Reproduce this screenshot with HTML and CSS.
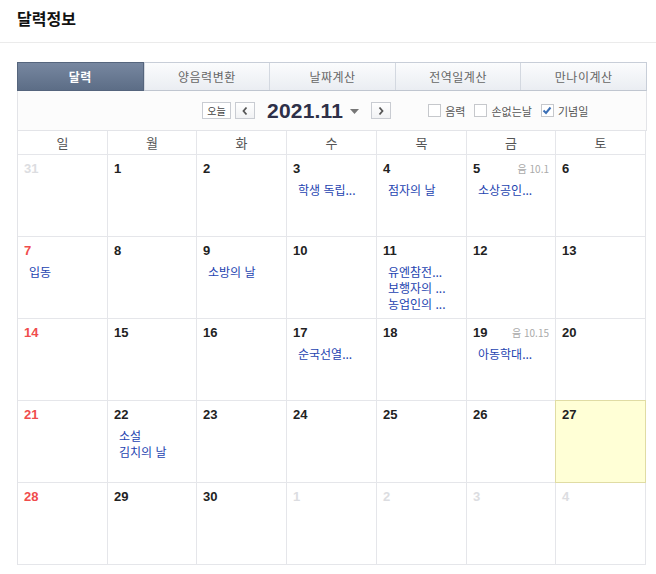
FILE: index.html
```html
<!DOCTYPE html>
<html lang="ko">
<head>
<meta charset="utf-8">
<link rel="stylesheet" href="styles.css">
</head>
<body>
<div class="head"><h1 class="title">달력정보</h1></div>
<div class="cal">
  <div class="tabs">
    <div class="tab on">달력</div>
    <div class="tab">양음력변환</div>
    <div class="tab">날짜계산</div>
    <div class="tab">전역일계산</div>
    <div class="tab">만나이계산</div>
  </div>
  <div class="nav">
    <span class="btn today">오늘</span>
    <span class="btn arrow"><svg width="8" height="10" viewBox="0 0 8 10"><path d="M5.5 1.5 L2.5 5 L5.5 8.5" fill="none" stroke="#555" stroke-width="1.8"/></svg></span>
    <span class="ym">2021.11</span>
    <span class="caret"><svg width="9" height="5" viewBox="0 0 9 5"><path d="M0 0 H9 L4.5 5 Z" fill="#777"/></svg></span>
    <span class="btn arrow next"><svg width="8" height="10" viewBox="0 0 8 10"><path d="M2.5 1.5 L5.5 5 L2.5 8.5" fill="none" stroke="#555" stroke-width="1.8"/></svg></span>
    <span class="opts">
      <span class="opt"><span class="cb"></span>음력</span>
      <span class="opt"><span class="cb"></span>손없는날</span>
      <span class="opt"><span class="cb checked"><svg width="10" height="9" viewBox="0 0 10 9"><path d="M1.5 4.5 L4 7 L8.5 1.5" fill="none" stroke="#3b6fb6" stroke-width="2"/></svg></span>기념일</span>
    </span>
  </div>
  <div class="grid">
    <div class="dh">일</div><div class="dh">월</div><div class="dh">화</div><div class="dh">수</div><div class="dh">목</div><div class="dh">금</div><div class="dh">토</div>

    <div class="cell"><div class="d other">31</div></div>
    <div class="cell"><div class="d">1</div></div>
    <div class="cell"><div class="d">2</div></div>
    <div class="cell"><div class="d">3</div><div class="ev">학생 독립...</div></div>
    <div class="cell"><div class="d">4</div><div class="ev">점자의 날</div></div>
    <div class="cell"><div class="d">5<span class="lunar">음 10.1</span></div><div class="ev">소상공인...</div></div>
    <div class="cell"><div class="d">6</div></div>

    <div class="cell"><div class="d sun">7</div><div class="ev">입동</div></div>
    <div class="cell"><div class="d">8</div></div>
    <div class="cell"><div class="d">9</div><div class="ev">소방의 날</div></div>
    <div class="cell"><div class="d">10</div></div>
    <div class="cell"><div class="d">11</div><div class="ev">유엔참전...</div><div class="ev">보행자의 ...</div><div class="ev">농업인의 ...</div></div>
    <div class="cell"><div class="d">12</div></div>
    <div class="cell"><div class="d">13</div></div>

    <div class="cell"><div class="d sun">14</div></div>
    <div class="cell"><div class="d">15</div></div>
    <div class="cell"><div class="d">16</div></div>
    <div class="cell"><div class="d">17</div><div class="ev">순국선열...</div></div>
    <div class="cell"><div class="d">18</div></div>
    <div class="cell"><div class="d">19<span class="lunar">음 10.15</span></div><div class="ev">아동학대...</div></div>
    <div class="cell"><div class="d">20</div></div>

    <div class="cell"><div class="d sun">21</div></div>
    <div class="cell"><div class="d">22</div><div class="ev">소설</div><div class="ev">김치의 날</div></div>
    <div class="cell"><div class="d">23</div></div>
    <div class="cell"><div class="d">24</div></div>
    <div class="cell"><div class="d">25</div></div>
    <div class="cell"><div class="d">26</div></div>
    <div class="cell today-cell"><div class="d">27</div></div>

    <div class="cell"><div class="d sun">28</div></div>
    <div class="cell"><div class="d">29</div></div>
    <div class="cell"><div class="d">30</div></div>
    <div class="cell"><div class="d other">1</div></div>
    <div class="cell"><div class="d other">2</div></div>
    <div class="cell"><div class="d other">3</div></div>
    <div class="cell"><div class="d other">4</div></div>
  </div>
</div>
</body>
</html>
```

FILE: styles.css
```css
* { box-sizing: border-box; }
body {
  margin: 0;
  background: #fff;
  font-family: "Noto Sans CJK KR", "Noto Sans", sans-serif;
  color: #222;
}
.head {
  height: 43px;
  border-bottom: 1px solid #ebebeb;
  padding: 8px 17px 0;
}
.title {
  margin: 0;
  font-size: 16px;
  font-weight: bold;
  line-height: 20px;
  color: #111;
}
.cal {
  margin: 19px 0 0 17px;
  width: 630px;
}
.tabs {
  display: grid;
  grid-template-columns: repeat(5, 1fr);
  height: 29px;
  border: 1px solid #c8ced8;
  border-bottom-color: #c0c6d0;
}
.tab {
  display: flex;
  align-items: center;
  justify-content: center;
  font-size: 12px;
  color: #666;
  background: linear-gradient(#fbfcfd, #eaedf2);
  border-left: 1px solid #d3d8e0;
  letter-spacing: 0.5px;
}
.tab:first-child { border-left: none; }
.tab.on {
  background: linear-gradient(#7787a0, #5c6d86);
  color: #fff;
  font-weight: bold;
  margin: -1px 0 -1px -1px;
  border: 1px solid #55657d;
}
.nav {
  display: flex;
  align-items: center;
  height: 40px;
  background: #fcfcfc;
  border-left: 1px solid #e3e4e8;
  border-right: 1px solid #e3e4e8;
  border-bottom: 1px solid #e3e4e8;
  padding-left: 184px;
}
.btn {
  display: inline-flex;
  align-items: center;
  justify-content: center;
  height: 17px;
  border: 1px solid #c9ccd2;
  background: #fff;
  font-size: 10px;
  color: #444;
}
.today { width: 29px; }
.arrow { width: 20px; margin-left: 4px; background: linear-gradient(#fff, #f1f2f4); }
.ym {
  margin-left: 12px;
  font-family: "Liberation Sans", Arial, sans-serif;
  font-weight: bold;
  font-size: 21px;
  color: #2e3048;
  letter-spacing: 0.2px;
}
.caret { display: inline-flex; margin-left: 7px; margin-top: 1px; }
.next { margin-left: 12px; }
.opts {
  display: flex;
  align-items: center;
  margin-left: 37px;
  gap: 9px;
}
.opt {
  display: inline-flex;
  align-items: center;
  font-size: 11px;
  color: #555;
}
.cb {
  display: inline-flex;
  align-items: center;
  justify-content: center;
  width: 13px;
  height: 13px;
  border: 1px solid #c6c8cc;
  background: #fff;
  margin-right: 4px;
}
.grid {
  display: grid;
  grid-template-columns: 90px 89px 90px 90px 90px 89px 90px;
  grid-template-rows: 24px repeat(5, 82px);
  border-left: 1px solid #e3e4e8;
}
.dh {
  display: flex;
  align-items: center;
  justify-content: center;
  font-size: 13px;
  color: #555;
  border-right: 1px solid #e5e6ea;
  border-bottom: 1px solid #e5e6ea;
}
.cell {
  border-right: 1px solid #e5e6ea;
  border-bottom: 1px solid #e5e6ea;
  padding: 6px 0 0 6px;
  position: relative;
}
.d {
  display: flex;
  justify-content: space-between;
  align-items: baseline;
  font-family: "Liberation Sans", Arial, sans-serif;
  font-weight: bold;
  font-size: 13px;
  color: #222;
  height: 19px;
  padding-right: 6px;
}
.d.sun { color: #f04c4c; }
.d.other { color: #dcdde1; }
.lunar {
  font-family: "Noto Sans CJK KR", sans-serif;
  font-weight: normal;
  font-size: 10px;
  color: #aaa;
}
.ev {
  font-size: 12px;
  line-height: 16px;
  color: #2443b0;
  padding-left: 5px;
  white-space: nowrap;
}
.d + .ev { margin-top: 2px; }
.today-cell {
  background: #ffffd6;
  border: 1px solid #e0dca4;
  margin: -1px 0 0 -1px;
}
```
